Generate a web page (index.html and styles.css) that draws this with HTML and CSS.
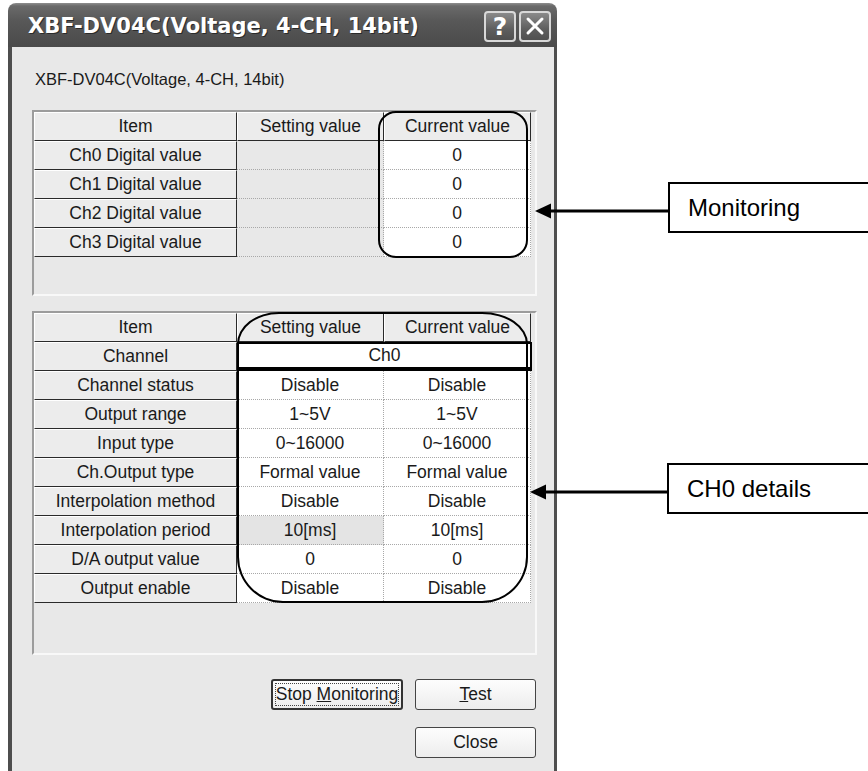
FILE: index.html
```html
<!DOCTYPE html>
<html lang="en">
<head>
  <meta charset="UTF-8" />
  <title>XBF-DV04C monitor</title>
  <link rel="stylesheet" href="styles.css">
</head>
<body>

  <div class="window">
    <div class="titlebar">
      <span class="title">XBF-DV04C(Voltage, 4-CH, 14bit)</span>
      <div class="caption-buttons">
        <span class="cap-btn">?</span>
        <span class="cap-btn">
          <svg width="20" height="20" viewBox="0 0 20 20">
            <path d="M3 3 L17 17 M17 3 L3 17" stroke="#fff" stroke-width="3" stroke-linecap="round"/>
          </svg>
        </span>
      </div>
    </div>

    <div class="client">
      <p class="module-name">XBF-DV04C(Voltage, 4-CH, 14bit)</p>

      <div class="panel panel-monitor">
        <div class="grid">
          <div class="hd">Item</div>
          <div class="hd">Setting value</div>
          <div class="hd">Current value</div>

          <div class="item">Ch0 Digital value</div>
          <div class="val off"></div>
          <div class="val">0</div>

          <div class="item">Ch1 Digital value</div>
          <div class="val off"></div>
          <div class="val">0</div>

          <div class="item">Ch2 Digital value</div>
          <div class="val off"></div>
          <div class="val">0</div>

          <div class="item">Ch3 Digital value</div>
          <div class="val off"></div>
          <div class="val">0</div>
        </div>
        <div class="ring ring-monitor"></div>
      </div>

      <div class="panel panel-details">
        <div class="grid">
          <div class="hd">Item</div>
          <div class="hd">Setting value</div>
          <div class="hd">Current value</div>

          <div class="item">Channel</div>
          <div class="val channel">Ch0</div>

          <div class="item">Channel status</div>
          <div class="val">Disable</div>
          <div class="val">Disable</div>

          <div class="item">Output range</div>
          <div class="val">1~5V</div>
          <div class="val">1~5V</div>

          <div class="item">Input type</div>
          <div class="val">0~16000</div>
          <div class="val">0~16000</div>

          <div class="item">Ch.Output type</div>
          <div class="val">Formal value</div>
          <div class="val">Formal value</div>

          <div class="item">Interpolation method</div>
          <div class="val">Disable</div>
          <div class="val">Disable</div>

          <div class="item">Interpolation period</div>
          <div class="val off">10[ms]</div>
          <div class="val">10[ms]</div>

          <div class="item">D/A output value</div>
          <div class="val">0</div>
          <div class="val">0</div>

          <div class="item">Output enable</div>
          <div class="val">Disable</div>
          <div class="val">Disable</div>
        </div>
        <div class="ring ring-details"></div>
      </div>

      <div class="actions">
        <div class="btn-row">
          <button class="btn btn-focus">Stop <u>M</u>onitoring</button>
          <button class="btn btn-test"><u>T</u>est</button>
        </div>
        <div class="btn-row">
          <button class="btn btn-test">Close</button>
        </div>
      </div>
    </div>
  </div>

  <div class="callout callout-monitor">
    <svg width="133" height="51" viewBox="0 0 133 51">
      <path d="M14 29 H133" stroke="#000" stroke-width="3"/>
      <polygon points="0,29 16,21.5 16,36.5" fill="#000"/>
    </svg>
    <div class="callout-label">Monitoring</div>
  </div>

  <div class="callout callout-details">
    <svg width="137" height="51" viewBox="0 0 137 51">
      <path d="M14 29 H137" stroke="#000" stroke-width="3"/>
      <polygon points="0,29 16,21.5 16,36.5" fill="#000"/>
    </svg>
    <div class="callout-label">CH0 details</div>
  </div>

</body>
</html>
```

FILE: styles.css
```css
html, body {
  overflow: hidden;
}

body {
  margin: 0;
  background: #fff;
  font-family: 'Liberation Sans', Arial, sans-serif;
  color: #1a1a1a;
}

.window {
  width: 549px;
  margin: 3px 0 0 8px;
}

.titlebar {
  height: 44px;
  box-sizing: border-box;
  border-radius: 8px 8px 0 0;
  background: linear-gradient(to bottom, #8e8e8e 0, #6a6a6a 3px, #585858 40%, #4a4a4a 100%);
  display: flex;
  align-items: center;
  justify-content: space-between;
  padding: 0 6px 0 20px;
}

.title {
  font-family: 'DejaVu Sans', sans-serif;
  font-weight: bold;
  font-size: 21px;
  color: #fff;
  text-shadow: 1px 1px 0 #2a2a2a;
  margin-top: 1px;
}

.caption-buttons {
  display: flex;
  gap: 3px;
  margin-top: 2px;
}

.cap-btn {
  width: 32px;
  height: 31px;
  box-sizing: border-box;
  border: 2px solid #d8d8d8;
  border-radius: 4px;
  background: linear-gradient(to bottom, #8a8a8a, #5e5e5e 60%, #505050);
  display: flex;
  align-items: center;
  justify-content: center;
  font-family: 'DejaVu Sans', sans-serif;
  font-weight: bold;
  font-size: 25px;
  color: #fff;
}

.client {
  height: 724px;
  box-sizing: border-box;
  background: #e8e8e8;
  border-left: 4px solid #4e4e4e;
  border-right: 3px solid #4e4e4e;
  padding: 22px 0 0 20px;
}

.module-name {
  margin: 0 0 21px 3px;
  font-size: 16.5px;
  line-height: 20px;
}

.panel {
  position: relative;
  width: 505px;
  box-sizing: border-box;
  border: 2px solid;
  border-color: #9c9c9c #f8f8f8 #f8f8f8 #9c9c9c;
}

.panel-monitor {
  height: 186px;
}

.panel-details {
  height: 344px;
  margin-top: 15px;
}

.grid {
  display: grid;
  grid-template-columns: 203px 147px 147px;
  grid-auto-rows: 29px;
  font-size: 17.5px;
}

.grid > div {
  box-sizing: border-box;
  display: flex;
  align-items: center;
  justify-content: center;
  white-space: nowrap;
}

.hd, .item {
  background: #ececec;
  border-top: 1px solid #fff;
  border-left: 1px solid #fff;
  border-right: 1px solid #2a2a2a;
  border-bottom: 1px solid #2a2a2a;
}

.val {
  background: #fff;
  border-right: 1px dotted #a8a8a8;
  border-bottom: 1px dotted #a8a8a8;
}

.val.off {
  background: #e4e4e4;
}

.panel-monitor .val.off {
  background: #e8e8e8;
}

.val.channel {
  grid-column: span 2;
  border: 2px solid #000;
  border-bottom-width: 4px;
  margin-right: -1px;
}

.ring {
  position: absolute;
  box-sizing: border-box;
  border: 2px solid #000;
  pointer-events: none;
}

.ring-monitor {
  left: 344px;
  top: -1px;
  width: 150px;
  height: 147px;
  border-radius: 18px;
}

.ring-details {
  left: 203px;
  top: -1px;
  width: 291px;
  height: 291px;
  border-radius: 42px 46px 46px 46px / 32px 32px 46px 46px;
}

.actions {
  width: 504px;
  margin-top: 24px;
  display: flex;
  flex-direction: column;
  align-items: flex-end;
  gap: 17px;
}

.btn-row {
  display: flex;
  gap: 12px;
}

.btn {
  position: relative;
  height: 31px;
  padding: 0;
  font-family: inherit;
  font-size: 17.5px;
  color: #1a1a1a;
  background: linear-gradient(to bottom, #fdfdfd, #ededed);
  border: 1px solid #454545;
  border-radius: 3px;
}

.btn-test {
  width: 121px;
}

.btn-focus {
  width: 132px;
  border: 2px solid #333;
}

.btn-focus::after {
  content: "";
  position: absolute;
  inset: 2px;
  border: 1px dotted #444;
}

.callout {
  position: absolute;
  display: flex;
  align-items: flex-start;
}

.callout svg {
  display: block;
}

.callout-monitor {
  left: 535px;
  top: 182px;
}

.callout-details {
  left: 530px;
  top: 463px;
}

.callout-label {
  width: 220px;
  height: 51px;
  box-sizing: border-box;
  border: 2px solid #000;
  background: #fff;
  padding-left: 18px;
  font-size: 24px;
  line-height: 47px;
  color: #000;
}
```
